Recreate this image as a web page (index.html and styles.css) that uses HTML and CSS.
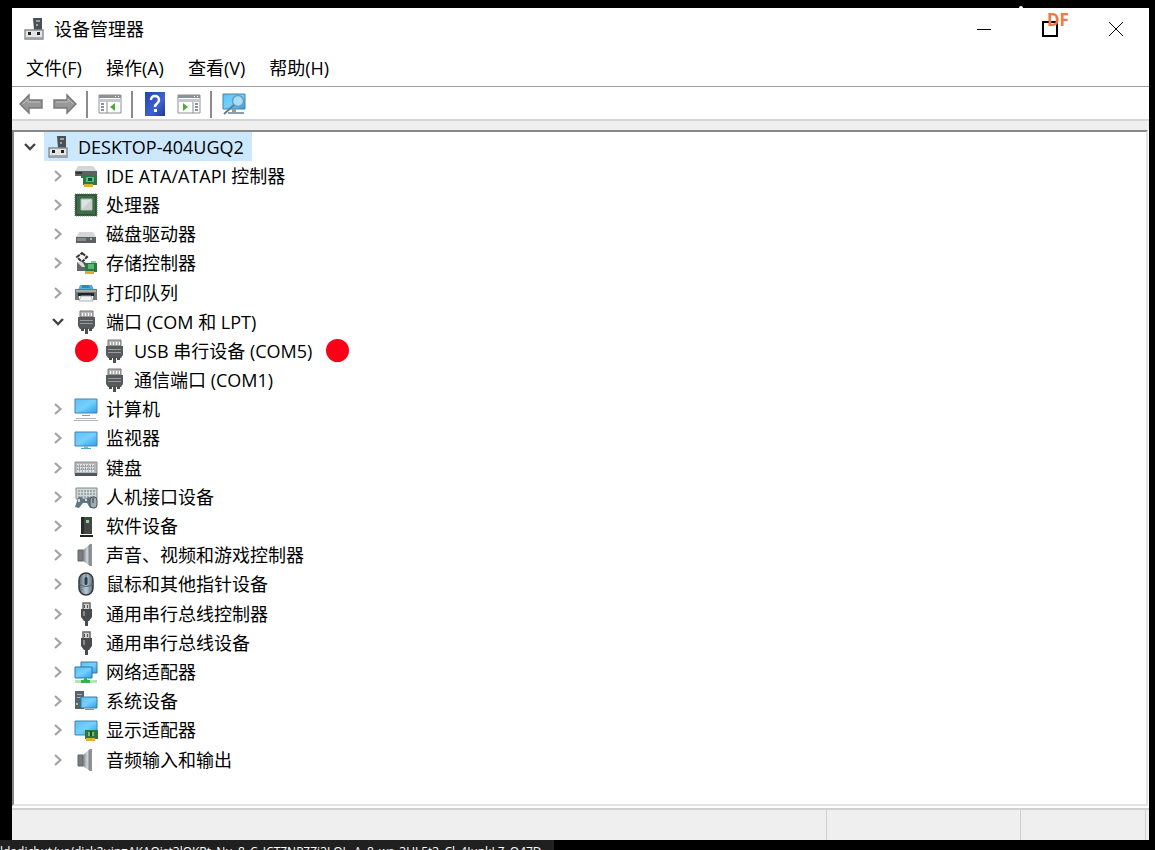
FILE: index.html
```html
<!DOCTYPE html>
<html lang="zh-CN">
<head>
<meta charset="utf-8">
<title>设备管理器</title>
<link rel="stylesheet" href="styles.css">
</head>
<body>
<svg class="sprite" aria-hidden="true">
  <defs>
    <linearGradient id="sky" x1="0" y1="0" x2="1" y2="1"><stop offset="0" stop-color="#5fc0f5"/><stop offset=".5" stop-color="#74d0ff"/><stop offset="1" stop-color="#2f9be8"/></linearGradient>
    <linearGradient id="steel" x1="0" y1="0" x2="1" y2="0"><stop offset="0" stop-color="#777"/><stop offset=".6" stop-color="#d4dae0"/><stop offset="1" stop-color="#777"/></linearGradient>
    <linearGradient id="blue" x1="0" y1="0" x2="1" y2="1"><stop offset="0" stop-color="#2443a4"/><stop offset=".6" stop-color="#3d62d4"/><stop offset="1" stop-color="#1d3790"/></linearGradient>
    <linearGradient id="mouse" x1="0" y1="0" x2="1" y2="0"><stop offset="0" stop-color="#56636d"/><stop offset=".5" stop-color="#b9cad6"/><stop offset="1" stop-color="#5d6b76"/></linearGradient>
  </defs>
  <symbol id="open" viewBox="0 0 14 10"><path d="M2 2l5 5 5-5" fill="none" stroke="#444" stroke-width="2.4"/></symbol>
  <symbol id="closed" viewBox="0 0 10 14"><path d="M2 2l5.500 5L2 12" fill="none" stroke="#a3a3a3" stroke-width="2.200"/></symbol>
  <symbol id="pc" viewBox="0 0 24 24"><path d="M11 1h9v12h-8z" fill="#4a5054"/><path d="M14 3h4v2h-4zM14 7h2v2h-2z" fill="#9aa3a8"/><path d="M3 13h18v9H3z" fill="#e3e6e8" stroke="#858b90" stroke-width="1.400"/><path d="M6 15h3v3H6zM15 15h3v3h-3z" fill="#222"/><path d="M4 20h16v1H4z" fill="#aaa"/></symbol>
  <symbol id="ide" viewBox="0 0 24 24"><path d="M4 2h15l4 5H1z" fill="#d3d7d9"/><path d="M1 7h22v5H1z" fill="#5b6163"/><path d="M2 8h6v2H2z" fill="#333"/><path d="M7 11h16v10H9V14H7z" fill="#2c7844"/><path d="M12 13h8v5h-8z" fill="#55bd80"/><path d="M14 14h4v3h-4z" fill="#174c45"/><path d="M10 20h9v3h-9z" fill="#e0ae2e"/></symbol>
  <symbol id="cpu" viewBox="0 0 24 24"><path d="M2 2h20v20H2z" fill="#3f6b49" stroke="#2f5438" stroke-width="2"/><path d="M1 1h22v22H1z" fill="none" stroke="#5d8a66" stroke-dasharray="1 1"/><path d="M7 6h11v11H7z" fill="#dde5e2" stroke="#a3bcaa"/><path d="M8 16L17 7v9z" fill="#c9d1cf"/></symbol>
  <symbol id="disk" viewBox="0 0 24 24"><path d="M5 10h14l3 5H2z" fill="#d4d6d7"/><path d="M2 15h20v6H2z" fill="#5c6062"/><path d="M3 16h9v3H3z" fill="#858a8c"/><path d="M16 16h2v2h-2z" fill="#76d09b"/></symbol>
  <symbol id="storage" viewBox="0 0 24 24"><path d="M8 2l5 4-5 5-5-5z" fill="#f5f5f5" stroke="#333" stroke-width="2" stroke-dasharray="4 1"/><path d="M3 11h8l3 5v4H3z" fill="#5f6769"/><path d="M3 11h5l4 5H8z" fill="#ddd"/><path d="M10 12h13v9H12z" fill="#2b7742"/><path d="M14 13h6v5h-6z" fill="#59b578"/><path d="M17 10h5v2h-5z" fill="#8bc79b"/><path d="M11 20h9v3h-9z" fill="#dfab2a"/></symbol>
  <symbol id="printer" viewBox="0 0 24 24"><path d="M6 4h12l2 5H4z" fill="#45b5dd"/><path d="M8 4h7l1 3H8z" fill="#248eb9"/><path d="M1 8h22v11h-4v-5H5v5H1z" fill="#70787c"/><path d="M2 9h20v2H2z" fill="#a3adb1"/><path d="M4 12h16v3H4z" fill="#202527"/><path d="M7 15h10l2 5H5z" fill="#eef3f5" stroke="#aab3b7"/></symbol>
  <symbol id="port" viewBox="0 0 24 24"><path d="M6 1h13v6H6z" fill="#b5b5b5" stroke="#777"/><path d="M8 3h1v3H8zM11 3h1v3h-1zM14 3h1v3h-1zM17 3h1v3h-1z" fill="#fff"/><path d="M4 7h17v9l-2 3H6l-2-3z" fill="#555a5c"/><path d="M6 10h13v1H6zM6 13h13v1H6z" fill="#9a9d9f"/><path d="M7 18h3v3H7zM15 18h3v3h-3zM11 18h3v6h-3z" fill="#4c4e50"/></symbol>
  <symbol id="computer" viewBox="0 0 24 24"><path d="M1 2h22v14H1z" fill="url(#sky)" stroke="#4384aa"/><path d="M8 18h8v1H8z" fill="#66a9c9"/><path d="M2 21h20v1H2zM0 23h24v1H0z" fill="#b0b5b8"/></symbol>
  <symbol id="monitor" viewBox="0 0 24 24"><path d="M1 6h22v14H1z" fill="url(#sky)" stroke="#4384aa"/><path d="M10 20h4v2h-4z" fill="#89bacf"/><path d="M7 22h10v1H7z" fill="#50a8c9"/></symbol>
  <symbol id="keyboard" viewBox="0 0 24 24"><path d="M1 6h22v13H1z" fill="#b3b8bb" stroke="#8a8f92"/><path d="M3 9h18M3 12h18M3 15h18" stroke="#f0f2f3" stroke-width="1.500" stroke-dasharray="2 1"/><path d="M3 10h18M3 13h18" stroke="#777" stroke-dasharray="1 1"/><path d="M1 17h22v3H1z" fill="#50565a"/></symbol>
  <symbol id="hid" viewBox="0 0 24 24"><path d="M2 3h21v11H2z" fill="#d1d6d9" stroke="#818b90"/><path d="M4 6h17M4 9h17M4 12h17" stroke="#737d82" stroke-dasharray="2 1"/><path d="M4 13q3-3 5 1h3q3-4 5 0l2 8-3 1-3-5H9l-4 5-4-1z" fill="#5f7683"/><path d="M4 14h2v3H4zM11 14h2v2h-2z" fill="#c8dce7"/><rect x="16" y="12" width="7" height="11" rx="3" fill="#9dabb3" stroke="#465057"/><path d="M19 13v5" stroke="#333"/></symbol>
  <symbol id="software" viewBox="0 0 24 24"><path d="M7 3h11v17H7z" fill="#414844"/><path d="M7 3h3v17H7z" fill="#252b28"/><path d="M12 6h3v3h-3z" fill="#8bd394"/><path d="M6 21h13v2H6z" fill="#222"/></symbol>
  <symbol id="speaker" viewBox="0 0 24 24"><path d="M4 7h5v11H4z" fill="#777c80" stroke="#5f6468"/><path d="M9 7l7-6v22l-7-5z" fill="url(#steel)"/><path d="M16 1h2v22h-2z" fill="#8c9297"/></symbol>
  <symbol id="mice" viewBox="0 0 24 24"><rect x="5" y="1" width="14" height="22" rx="7" fill="url(#mouse)" stroke="#313a40" stroke-width="1.500"/><path d="M5 12q7 5 14 0M12 2v4" fill="none" stroke="#526069"/><rect x="10.500" y="5" width="3" height="8" rx="1.500" fill="#283e51"/></symbol>
  <symbol id="usb" viewBox="0 0 24 24"><path d="M9 1h7v7H9z" fill="#d0d0d0" stroke="#666" stroke-width="1.500"/><path d="M10 3h1v3h-1zM13 3h1v3h-1z" fill="#555"/><path d="M7 7h11v8l-3 4h-1v5h-3v-5h-1l-3-4z" fill="#484b4d"/><path d="M9 9h2v5H9z" fill="#85898b"/></symbol>
  <symbol id="network" viewBox="0 0 24 24"><path d="M7 2h16v11H7z" fill="url(#sky)" stroke="#367aa0"/><path d="M1 7h17v11H1z" fill="url(#sky)" stroke="#2876a1"/><path d="M9 18h5v2h9v3H1v-3h8z" fill="#b9e3b9"/><path d="M10 18h3v2h3v3H7v-3h3z" fill="#3cae4e"/></symbol>
  <symbol id="system" viewBox="0 0 24 24"><path d="M1 2h9v18H1z" fill="#56636c"/><path d="M3 5h5v1H3zM3 8h5v1H3z" fill="#abb8c0"/><path d="M2 14h2v2H2z" fill="#7de086"/><path d="M7 8h16v11H7z" fill="url(#sky)" stroke="#367aa0"/><path d="M11 20h9v1h-9z" fill="#4ba2c7"/></symbol>
  <symbol id="display" viewBox="0 0 24 24"><path d="M1 3h22v14H1z" fill="url(#sky)" stroke="#4384aa"/><path d="M11 12h13v9H11z" fill="#2e7540"/><path d="M14 14h6v4h-6z" fill="#77bd6c"/><path d="M16 13h2v5h-2z" fill="#1d4336"/><path d="M12 20h9v3h-9z" fill="#ddb038"/></symbol>
  <symbol id="back" viewBox="0 0 24 22"><path d="M1 11L10 2v5h13v8H10v5z" fill="#989898" stroke="#777" stroke-width="1.400"/><path d="M4 11l5-5v3h12" fill="none" stroke="#bdbdbd"/></symbol>
  <symbol id="forward" viewBox="0 0 24 22"><path d="M23 11L14 2v5H1v8h13v5z" fill="#989898" stroke="#777" stroke-width="1.400"/><path d="M3 9h12V6l5 5" fill="none" stroke="#bdbdbd"/></symbol>
  <symbol id="tree-pane" viewBox="0 0 24 22"><path d="M1 2h22v18H1z" fill="#fff" stroke="#8c9196"/><path d="M1 2h22v3H1z" fill="#8b9197"/><path d="M17 3h1v1h-1zM20 3h1v1h-1z" fill="#fff"/><path d="M1 6h22v3H1z" fill="#c5c9ce"/><path d="M9 9v11" stroke="#84898e"/><path d="M3 11h3M3 14h3M3 17h3" stroke="#5d6e89" stroke-width="1.500"/><path d="M17 10v8l-5-4z" fill="#4fa93c"/></symbol>
  <symbol id="action-pane" viewBox="0 0 24 22"><path d="M1 2h22v18H1z" fill="#fff" stroke="#8c9196"/><path d="M1 2h22v3H1z" fill="#8b9197"/><path d="M17 3h1v1h-1zM20 3h1v1h-1z" fill="#fff"/><path d="M1 6h22v3H1z" fill="#c5c9ce"/><path d="M16 9v11" stroke="#84898e"/><path d="M18 11h3M18 14h3M18 17h3" stroke="#5d6e89" stroke-width="1.500"/><path d="M6 10v8l5-4z" fill="#4fa93c"/></symbol>
  <symbol id="help" viewBox="0 0 20 24"><path d="M0 0h20v24H0z" fill="url(#blue)"/><path d="M6 8q0-4 4-4t4 4q0 2-2 3.500T10 15" fill="none" stroke="#fff" stroke-width="2.400"/><path d="M9 17h3v3H9z" fill="#fff"/></symbol>
  <symbol id="scan" viewBox="0 0 24 24"><path d="M1 2h22v15H1z" fill="url(#sky)" stroke="#4384aa"/><path d="M10 17h4v3h8v2H6v-2h4z" fill="#8ca1ac"/><circle cx="16" cy="9" r="5.500" fill="#a5e0fb" stroke="#6c9fb9" stroke-width="1.500"/><path d="M12 13L2 22" stroke="#697d89" stroke-width="2"/></symbol>
</svg>

<main class="window">
  <header class="titlebar">
    <svg class="icon"><use href="#pc"/></svg>
    <h1 class="title">设备管理器</h1>
    <div class="controls">
      <button class="control" aria-label="最小化"><svg class="glyph" viewBox="0 0 16 16"><path d="M1 8.500h14"/></svg></button>
      <button class="control" aria-label="最大化"><svg class="glyph thick" viewBox="0 0 16 16"><path d="M1 1h14v14H1z"/></svg><span class="mark">DF</span></button>
      <button class="control" aria-label="关闭"><svg class="glyph" viewBox="0 0 16 16"><path d="M1 1l14 14M15 1L1 15"/></svg></button>
    </div>
  </header>
  <nav class="menubar">
    <button class="menu">文件(F)</button>
    <button class="menu">操作(A)</button>
    <button class="menu">查看(V)</button>
    <button class="menu">帮助(H)</button>
  </nav>
  <div class="toolbar">
    <button class="tool" aria-label="后退"><svg class="icon"><use href="#back"/></svg></button>
    <button class="tool" aria-label="前进"><svg class="icon"><use href="#forward"/></svg></button>
    <span class="divider"></span>
    <button class="tool" aria-label="显示控制台树"><svg class="icon"><use href="#tree-pane"/></svg></button>
    <span class="divider"></span>
    <button class="tool" aria-label="帮助"><svg class="icon"><use href="#help"/></svg></button>
    <button class="tool" aria-label="显示操作窗格"><svg class="icon"><use href="#action-pane"/></svg></button>
    <span class="divider"></span>
    <button class="tool" aria-label="扫描检测硬件改动"><svg class="icon"><use href="#scan"/></svg></button>
  </div>
  <ul class="tree" role="tree">
    <li class="row" role="treeitem" aria-level="1" aria-expanded="true"><span class="twist"><svg class="down"><use href="#open"/></svg></span><span class="node selected"><svg class="icon"><use href="#pc"/></svg>DESKTOP-404UGQ2</span></li>
    <li class="row level-2" role="treeitem" aria-level="2"><span class="twist"><svg class="right"><use href="#closed"/></svg></span><span class="node"><svg class="icon"><use href="#ide"/></svg>IDE ATA/ATAPI 控制器</span></li>
    <li class="row level-2" role="treeitem" aria-level="2"><span class="twist"><svg class="right"><use href="#closed"/></svg></span><span class="node"><svg class="icon"><use href="#cpu"/></svg>处理器</span></li>
    <li class="row level-2" role="treeitem" aria-level="2"><span class="twist"><svg class="right"><use href="#closed"/></svg></span><span class="node"><svg class="icon"><use href="#disk"/></svg>磁盘驱动器</span></li>
    <li class="row level-2" role="treeitem" aria-level="2"><span class="twist"><svg class="right"><use href="#closed"/></svg></span><span class="node"><svg class="icon"><use href="#storage"/></svg>存储控制器</span></li>
    <li class="row level-2" role="treeitem" aria-level="2"><span class="twist"><svg class="right"><use href="#closed"/></svg></span><span class="node"><svg class="icon"><use href="#printer"/></svg>打印队列</span></li>
    <li class="row level-2" role="treeitem" aria-level="2" aria-expanded="true"><span class="twist"><svg class="down"><use href="#open"/></svg></span><span class="node"><svg class="icon"><use href="#port"/></svg>端口 (COM 和 LPT)</span></li>
    <li class="row level-3" role="treeitem" aria-level="3"><span class="twist"><span class="dot"></span></span><span class="node"><svg class="icon"><use href="#port"/></svg>USB 串行设备 (COM5)</span><span class="dot"></span></li>
    <li class="row level-3" role="treeitem" aria-level="3"><span class="twist"></span><span class="node"><svg class="icon"><use href="#port"/></svg>通信端口 (COM1)</span></li>
    <li class="row level-2" role="treeitem" aria-level="2"><span class="twist"><svg class="right"><use href="#closed"/></svg></span><span class="node"><svg class="icon"><use href="#computer"/></svg>计算机</span></li>
    <li class="row level-2" role="treeitem" aria-level="2"><span class="twist"><svg class="right"><use href="#closed"/></svg></span><span class="node"><svg class="icon"><use href="#monitor"/></svg>监视器</span></li>
    <li class="row level-2" role="treeitem" aria-level="2"><span class="twist"><svg class="right"><use href="#closed"/></svg></span><span class="node"><svg class="icon"><use href="#keyboard"/></svg>键盘</span></li>
    <li class="row level-2" role="treeitem" aria-level="2"><span class="twist"><svg class="right"><use href="#closed"/></svg></span><span class="node"><svg class="icon"><use href="#hid"/></svg>人机接口设备</span></li>
    <li class="row level-2" role="treeitem" aria-level="2"><span class="twist"><svg class="right"><use href="#closed"/></svg></span><span class="node"><svg class="icon"><use href="#software"/></svg>软件设备</span></li>
    <li class="row level-2" role="treeitem" aria-level="2"><span class="twist"><svg class="right"><use href="#closed"/></svg></span><span class="node"><svg class="icon"><use href="#speaker"/></svg>声音、视频和游戏控制器</span></li>
    <li class="row level-2" role="treeitem" aria-level="2"><span class="twist"><svg class="right"><use href="#closed"/></svg></span><span class="node"><svg class="icon"><use href="#mice"/></svg>鼠标和其他指针设备</span></li>
    <li class="row level-2" role="treeitem" aria-level="2"><span class="twist"><svg class="right"><use href="#closed"/></svg></span><span class="node"><svg class="icon"><use href="#usb"/></svg>通用串行总线控制器</span></li>
    <li class="row level-2" role="treeitem" aria-level="2"><span class="twist"><svg class="right"><use href="#closed"/></svg></span><span class="node"><svg class="icon"><use href="#usb"/></svg>通用串行总线设备</span></li>
    <li class="row level-2" role="treeitem" aria-level="2"><span class="twist"><svg class="right"><use href="#closed"/></svg></span><span class="node"><svg class="icon"><use href="#network"/></svg>网络适配器</span></li>
    <li class="row level-2" role="treeitem" aria-level="2"><span class="twist"><svg class="right"><use href="#closed"/></svg></span><span class="node"><svg class="icon"><use href="#system"/></svg>系统设备</span></li>
    <li class="row level-2" role="treeitem" aria-level="2"><span class="twist"><svg class="right"><use href="#closed"/></svg></span><span class="node"><svg class="icon"><use href="#display"/></svg>显示适配器</span></li>
    <li class="row level-2" role="treeitem" aria-level="2"><span class="twist"><svg class="right"><use href="#closed"/></svg></span><span class="node"><svg class="icon"><use href="#speaker"/></svg>音频输入和输出</span></li>
  </ul>
  <footer class="status"><span class="cell wide"></span><span class="cell mid"></span><span class="cell"></span></footer>
</main>
<div class="link-status">ldadicbut/us/disk2uin=AKAOist3lOKRt_Nu_8_C_JCTZNPZZi3LOL_A_8_ws_3UL5t3_Cl_4JunkLZ_O47D</div>
</body>
</html>
```

FILE: styles.css
```css
* {
  box-sizing: border-box;
}

body {
  margin: 0;
  height: 100vh;
  min-height: 800px;
  display: flex;
  flex-direction: column;
  padding: 8px 6px 0 12px;
  background: #000;
  color: #000;
  font: 18px/24px "Open Sans", "Noto Sans CJK SC", sans-serif;
  overflow: hidden;
}

.sprite {
  position: absolute;
  width: 0;
  height: 0;
}

button {
  border: 0;
  padding: 0;
  background: none;
  color: inherit;
  font: inherit;
}

.icon {
  flex: none;
  width: 24px;
  height: 24px;
}

.window {
  flex: 1;
  display: flex;
  flex-direction: column;
  background: #fff;
}

.titlebar {
  display: flex;
  align-items: center;
  height: 42px;
  padding-left: 10px;
  gap: 8px;
}

.title {
  margin: 0;
  font-size: 18px;
  font-weight: 400;
}

.controls {
  display: flex;
  align-self: stretch;
  margin-left: auto;
}

.control {
  position: relative;
  display: flex;
  align-items: center;
  justify-content: center;
  width: 66px;
}

.glyph {
  width: 16px;
  height: 16px;
  fill: none;
  stroke: #000;
}

.glyph.thick {
  stroke-width: 2;
}

.mark {
  position: absolute;
  top: 0;
  left: 30px;
  color: #ec7a43;
  font-size: 17px;
  font-weight: 700;
}

.mark::before {
  content: "";
  position: absolute;
  top: -2px;
  left: -28px;
  width: 4px;
  height: 4px;
  border-radius: 50%;
  background: #fff;
}

.menubar {
  display: flex;
  height: 37px;
  padding: 0 14px;
  gap: 24px;
  border-bottom: 1px solid #a0a0a0;
}

.toolbar {
  display: flex;
  align-items: center;
  height: 43px;
  padding: 0 7px 9px;
  gap: 10px;
  background: linear-gradient(#fff 32px, #d6d6d6 32px, #d6d6d6 34px, #efefef 34px);
}

.tool {
  display: flex;
}

.divider {
  width: 2px;
  height: 27px;
  margin-left: -1px;
  background: #8c8c8c;
}

.tree {
  flex: 1;
  display: flex;
  flex-direction: column;
  margin: 0 1px 2px 0;
  padding: 0 0 30px 2px;
  border: 2px solid #888;
  border-right-color: #e3e3e3;
  border-bottom-color: #e3e3e3;
  list-style: none;
}

.row {
  flex: 1;
  display: flex;
}

.level-2 {
  padding-left: 28px;
}

.level-3 {
  padding-left: 56px;
}

.twist {
  flex: none;
  display: flex;
  align-items: center;
  justify-content: center;
  width: 28px;
}

.down {
  width: 14px;
  height: 10px;
}

.right {
  width: 10px;
  height: 14px;
}

.node {
  display: flex;
  align-items: center;
  padding: 0 8px 0 2px;
  gap: 8px;
}

.selected {
  background: #cce8ff;
}

.dot {
  flex: none;
  align-self: center;
  width: 23px;
  height: 23px;
  margin: 0 6px;
  border-radius: 50%;
  background: #fb0017;
}

.status {
  display: flex;
  height: 32px;
  border-top: 2px solid #d0d0d0;
  padding-right: 3px;
  background: #efefef;
}

.cell {
  flex: 124;
  border-right: 1px solid #d0d0d0;
}

.cell.mid {
  flex: 194;
}

.cell.wide {
  flex: 815;
}

.link-status {
  align-self: flex-start;
  flex: none;
  height: 10px;
  margin-left: -12px;
  padding: 3px 12px 0 0;
  overflow: hidden;
  background: #202020;
  color: #fff;
  font-size: 12px;
  line-height: 17px;
  white-space: nowrap;
}
```
